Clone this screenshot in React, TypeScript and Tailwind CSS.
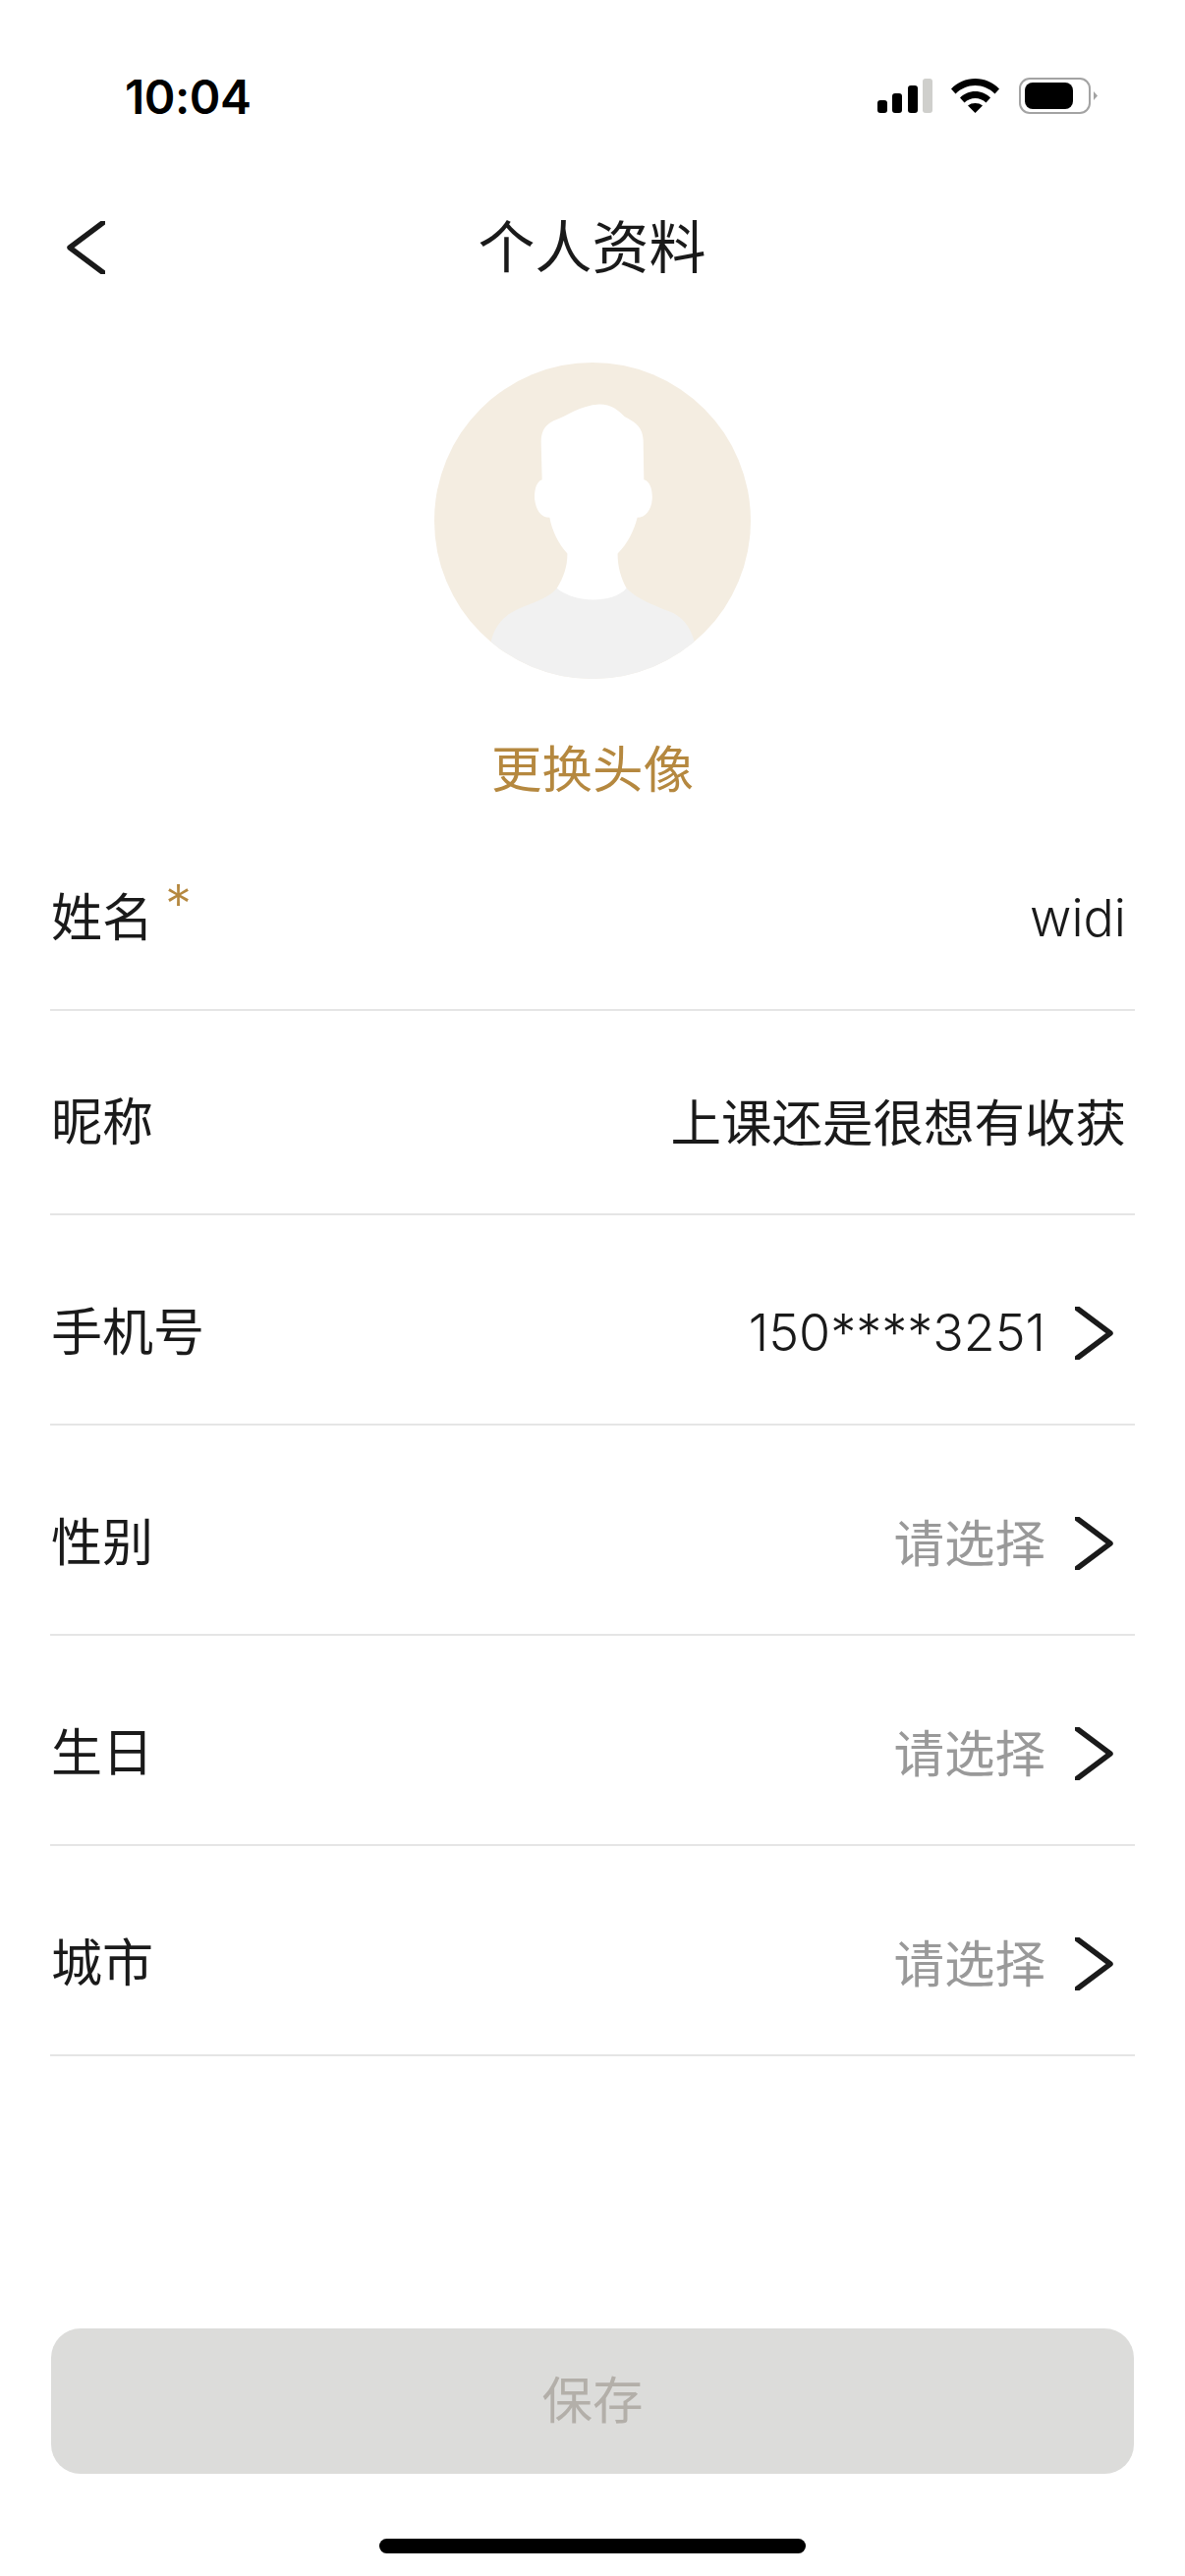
const cjk = "font-['Inter','Noto_Sans_CJK_SC',sans-serif]";

const rows = [
  { label: "姓名", value: "widi", required: true, latin: true, height: "h-[208px]" },
  { label: "昵称", value: "上课还是很想有收获", height: "h-[208px]" },
  { label: "手机号", value: "150****3251", arrow: true, latin: true, height: "h-[214px]" },
  { label: "性别", value: "请选择", arrow: true, muted: true, height: "h-[214px]" },
  { label: "生日", value: "请选择", arrow: true, muted: true, height: "h-[214px]" },
  { label: "城市", value: "请选择", arrow: true, muted: true, height: "h-[214px]" },
];

function StatusBar() {
  return (
    <div className="flex h-[196px] shrink-0 items-start justify-between pl-[127px] pr-[89px] pt-[71px]">
      <span className="font-['Inter',sans-serif] text-[48px] leading-[56px] font-semibold tracking-[-0.5px] text-black">
        10:04
      </span>
      <div className="mt-[8px] flex items-center">
        {/* signal */}
        <svg width="56" height="35" viewBox="0 0 56 35" className="mr-[19px]">
          <rect x="0" y="22" width="10" height="13" rx="3" fill="#000" />
          <rect x="15" y="15" width="10" height="20" rx="3" fill="#000" />
          <rect x="31" y="7" width="10" height="28" rx="3" fill="#000" />
          <rect x="46" y="0" width="10" height="35" rx="3" fill="#cfcfcc" />
        </svg>
        {/* wifi */}
        <svg width="49" height="35" viewBox="0 0 49 35" className="mr-[20px]">
          <path d="M0 10.500C6.500 3.800 15 0 24.500 0S42.500 3.800 49 10.500L44.500 15.500C39 10 32 7 24.500 7S10 10 4.500 15.500Z" fill="#000" />
          <path d="M9 19.500C13 15.500 18.500 13 24.500 13S36 15.500 40 19.500L35.500 24.500C32.500 21.500 28.500 20 24.500 20S16.500 21.500 13.500 24.500Z" fill="#000" />
          <path d="M17 27.500C19 25.800 21.700 25 24.500 25S30 25.800 32 27.500L24.500 35Z" fill="#000" />
        </svg>
        {/* battery */}
        <svg width="80" height="37" viewBox="0 0 80 37">
          <rect x="1" y="1" width="71" height="35" rx="10" fill="none" stroke="#a3a3a3" strokeWidth="2" />
          <rect x="6" y="5" width="49" height="27" rx="8" fill="#000" />
          <path d="M76 14L80 18.500L76 23Z" fill="#a3a3a3" />
        </svg>
      </div>
    </div>
  );
}

function Chevron({ flip = false }: { flip?: boolean }) {
  return (
    <svg width="40" height="54" viewBox="0 0 40 54" className={flip ? "rotate-180" : ""}>
      <path d="M44 -3L4 27L44 57" fill="none" stroke="#1a1a1a" strokeWidth="5.500" strokeLinejoin="round" />
    </svg>
  );
}

function Avatar() {
  return (
    <div className="h-[322px] w-[322px] overflow-hidden rounded-full bg-[#f4ede1]">
      <svg viewBox="127 58 963 963" className="block h-full w-full">
        {/* head and neck */}
        <path
          d="M630 185C665 185 688 203 705 222C730 236 762 250 763 295L765 415C785 420 792 450 790 475C788 505 770 530 745 530C735 570 715 610 685 640C685 680 695 715 712 745L712 800L500 800L500 745C520 715 532 680 532 640C505 610 485 570 478 530C450 530 435 505 432 470C432 440 440 420 455 415L452 300C452 262 468 247 490 235C530 222 570 188 630 185Z"
          fill="#fff"
        />
        {/* shirt */}
        <path
          d="M500 745C530 770 575 780 610 780C650 780 690 770 712 745C740 775 790 795 840 815C880 830 905 860 918 905L918 1030L300 1030L300 905C310 860 340 825 390 805C440 785 480 770 500 745Z"
          fill="#f1f1f1"
        />
      </svg>
    </div>
  );
}

export default function App() {
  return (
    <div className={`${cjk} flex h-[2622px] w-[1206px] flex-col overflow-hidden bg-white text-[#1a1a1a]`}>
      <StatusBar />

      <header className="grid h-[112px] shrink-0 grid-cols-[1fr_auto_1fr] items-center pl-[67px] pr-[68px]">
        <Chevron />
        <h1 className="text-[58px] leading-[64px] font-normal">个人资料</h1>
      </header>

      <div className="mt-[61px] flex shrink-0 flex-col items-center">
        <Avatar />
        <span className="mt-[56px] text-[51.500px] leading-[72px] font-normal text-[#b5883f]">更换头像</span>
      </div>

      <div className="mx-[51px] mt-[2px] flex shrink-0 flex-col">
        {rows.map((row) => (
          <div
            key={row.label}
            className={`${row.height} flex items-end justify-between border-b-2 border-[#e5e5e5] pb-[56px]`}
          >
            <div className="relative pl-[1px] text-[52px] leading-[72px] font-normal">
              {row.label}
              {row.required && (
                <span className="absolute left-[117px] top-[-15px] text-[54px] leading-[72px] font-light text-[#b5883f]">
                  *
                </span>
              )}
            </div>
            <div className="flex items-center pr-[9px]">
              <span
                className={`leading-[72px] ${row.latin ? "text-[52px] font-light" : "text-[51.500px] font-normal"} ${
                  row.muted ? "text-[#999999]" : ""
                }`}
              >
                {row.value}
              </span>
              {row.arrow && (
                <span className="mb-[1px] ml-[30px] mr-[12px]">
                  <Chevron flip />
                </span>
              )}
            </div>
          </div>
        ))}
      </div>

      <button className="mx-[52px] mt-[277px] flex h-[148px] shrink-0 items-center justify-center rounded-[30px] bg-[#dcdcda] text-[51.500px] font-normal text-[#b3afa9]">
        保存
      </button>

      <div className="mx-auto mt-[66px] h-[15px] w-[434px] shrink-0 rounded-full bg-black" />
    </div>
  );
}
